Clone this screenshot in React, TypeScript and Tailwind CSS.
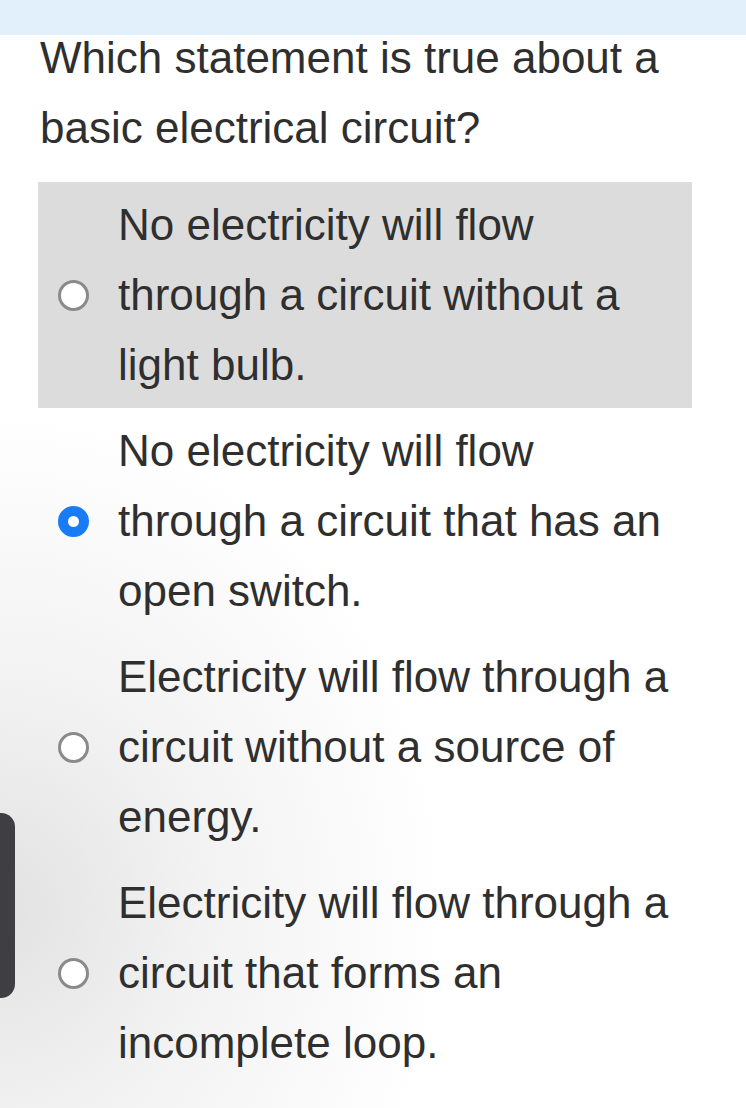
import React, { useState } from 'react';

const OPTIONS: string[][] = [
  ['No electricity will flow', 'through a circuit without a', 'light bulb.'],
  ['No electricity will flow', 'through a circuit that has an', 'open switch.'],
  ['Electricity will flow through a', 'circuit without a source of', 'energy.'],
  ['Electricity will flow through a', 'circuit that forms an', 'incomplete loop.'],
];

const App: React.FC = () => {
  const [selected, setSelected] = useState(1);

  return (
    <div
      className="relative min-h-[1108px] w-full overflow-hidden bg-[radial-gradient(ellipse_60%_45%_at_0%_82%,#e2e2e2_0%,#f2f2f2_45%,#ffffff_100%)] text-[#2f2f2f]"
      style={{ fontFamily: '"Liberation Sans", Arial, Helvetica, sans-serif' }}
    >
      {/* top bar */}
      <div className="relative z-10 h-[35px] w-full bg-[#e1f0fb]" />

      <div className="w-[692px] pl-[38px]">
        <h1 className="-mt-[12px] pl-[2px] text-[44px] font-normal leading-[70px]">
          <span className="block whitespace-nowrap">Which statement is true about a</span>
          <span className="block whitespace-nowrap">basic electrical circuit?</span>
        </h1>

        <div className="mt-[19px]">
          {OPTIONS.map((lines, i) => (
            <label
              key={i}
              onMouseDown={() => setSelected(i)}
              className={`flex cursor-pointer items-center py-2 ${i === 0 ? 'bg-[#dcdcdc]' : ''}`}
            >
              <span className="flex w-[80px] shrink-0 pl-5">
                {selected === i ? (
                  <span className="h-[31px] w-[31px] rounded-full border-[10px] border-[#1a7cf4] bg-white" />
                ) : (
                  <span className="h-[31px] w-[31px] rounded-full border-[3px] border-[#8a8a8a] bg-white" />
                )}
              </span>
              <span className="text-[44px] leading-[70px]">
                {lines.map((l) => (
                  <span key={l} className="block whitespace-nowrap">
                    {l}
                  </span>
                ))}
              </span>
            </label>
          ))}
        </div>
      </div>

      {/* side handle */}
      <div className="absolute left-0 top-[813px] h-[185px] w-[15px] rounded-r-[14px] bg-[#3e3e43]" />
    </div>
  );
};

export default App;
